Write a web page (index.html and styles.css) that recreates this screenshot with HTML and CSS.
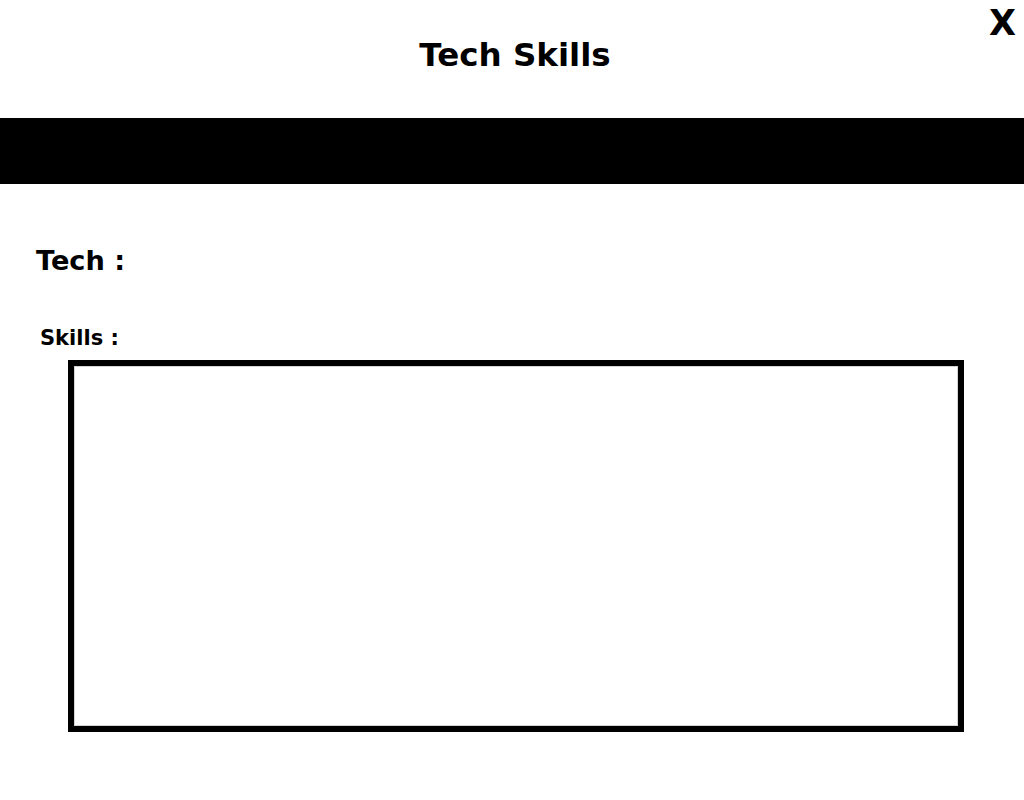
FILE: index.html
```html
<!DOCTYPE html>
<html lang="en">
<head>
<meta charset="utf-8">
<title>Tech Skills</title>
<link rel="stylesheet" href="styles.css">
</head>
<body>
<div class="page">
  <header class="header">
    <h1 class="title">Tech Skills</h1>
    <span class="close">X</span>
  </header>
  <div class="bar"></div>
  <main class="content">
    <h2 class="tech">Tech :</h2>
    <h3 class="skills">Skills :</h3>
    <div class="skills-box"></div>
  </main>
</div>
</body>
</html>
```
FILE: styles.css
```css
html, body {
  margin: 0;
  padding: 0;
  background: #ffffff;
}
body {
  font-family: "DejaVu Sans", Verdana, sans-serif;
  color: #000;
  width: 1024px;
  height: 800px;
  overflow: hidden;
}
.page {
  position: relative;
  width: 1024px;
}
.header {
  height: 118px;
  box-sizing: border-box;
  padding-top: 36px;
  padding-left: 6px;
  text-align: center;
}
.title {
  margin: 0;
  font-size: 32.5px;
  font-weight: bold;
  line-height: normal;
}
.close {
  position: absolute;
  top: 3px;
  right: 8px;
  font-size: 35px;
  font-weight: bold;
  line-height: normal;
}
.bar {
  height: 66px;
  background: #000;
}
.content {
  display: flex;
  flex-direction: column;
  align-items: flex-start;
}
.tech {
  margin: 61px 0 0 36px;
  font-size: 27.2px;
  font-weight: bold;
  line-height: normal;
}
.skills {
  margin: 50px 0 0 40px;
  font-size: 21px;
  font-weight: bold;
  line-height: normal;
}
.skills-box {
  margin: 10px 0 0 68px;
  width: 896px;
  height: 372px;
  box-sizing: border-box;
  border: 6px solid #000;
  box-shadow: inset 0 0 0 1px #d4d4d4;
  background: #fff;
}
```
